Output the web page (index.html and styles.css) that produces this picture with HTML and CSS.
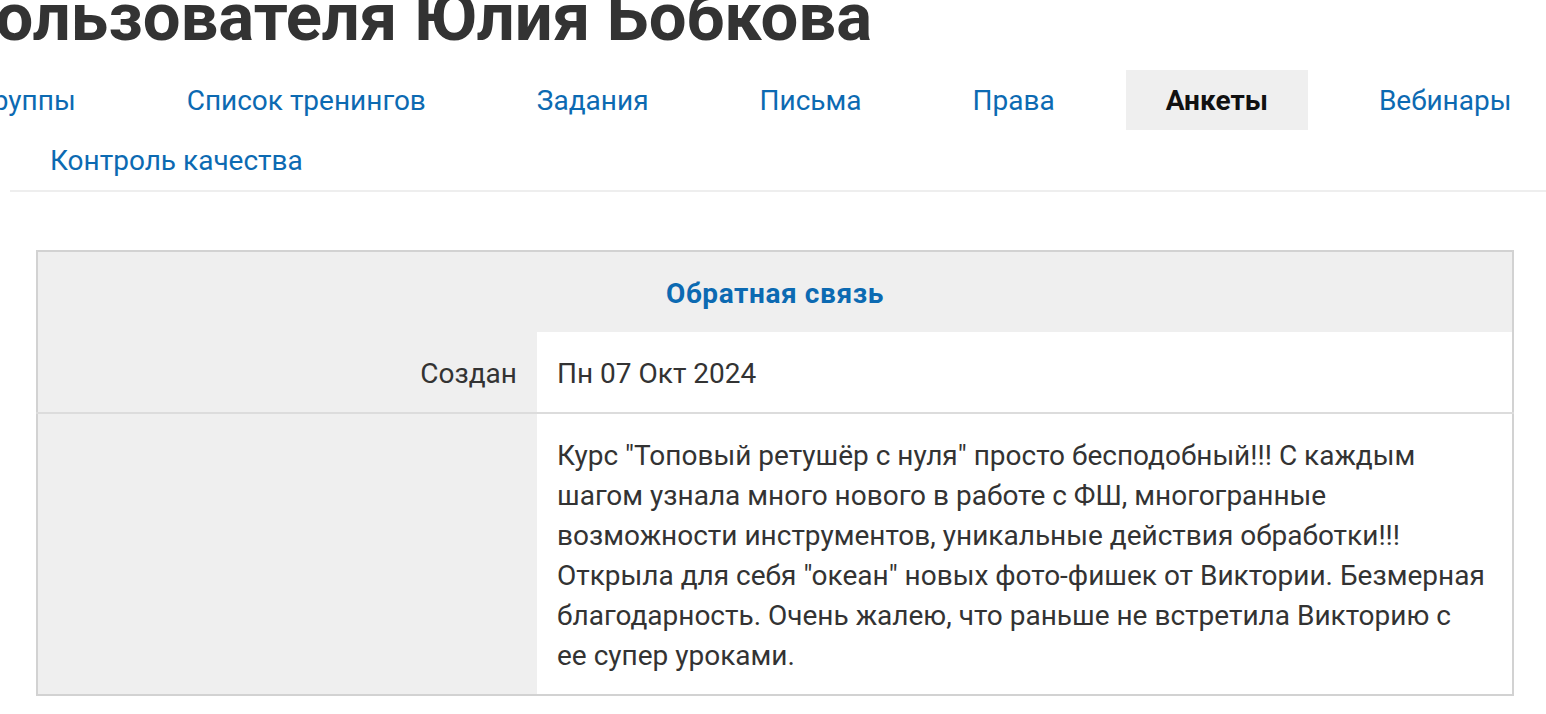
FILE: index.html
```html
<!DOCTYPE html>
<html lang="ru">
<head>
<meta charset="utf-8">
<title>Анкеты пользователя Юлия Бобкова</title>
<link rel="stylesheet" href="styles.css">
</head>
<body>
<div class="page">
  <div class="title-row">
    <h1 class="title">Анкеты пользователя Юлия Бобкова</h1>
  </div>
  <ul class="tabs">
    <li class="tab tab-first"><a href="#">Группы</a></li>
    <li class="tab"><a href="#">Список тренингов</a></li>
    <li class="tab"><a href="#">Задания</a></li>
    <li class="tab"><a href="#">Письма</a></li>
    <li class="tab"><a href="#">Права</a></li>
    <li class="tab active"><a href="#">Анкеты</a></li>
    <li class="tab"><a href="#">Вебинары</a></li>
    <li class="tab"><a href="#">Контроль качества</a></li>
  </ul>
  <table class="survey">
    <tr>
      <th class="head" colspan="2"><a href="#">Обратная связь</a></th>
    </tr>
    <tr>
      <th class="label">Создан</th>
      <td class="value">Пн 07 Окт 2024</td>
    </tr>
    <tr class="row-sep">
      <th class="label"></th>
      <td class="value"><p class="answer">Курс "Топовый ретушёр с нуля" просто бесподобный!!! С каждым шагом узнала много нового в работе с ФШ, многогранные возможности инструментов, уникальные действия обработки!!! Открыла для себя "океан" новых фото-фишек от Виктории. Безмерная благодарность. Очень жалею, что раньше не встретила Викторию с ее супер уроками.</p></td>
    </tr>
  </table>
</div>
</body>
</html>
```

FILE: styles.css
```css
html, body {
  margin: 0;
  padding: 0;
  background: #fff;
  overflow: hidden;
}
body {
  font-family: "Roboto", "Noto Sans", sans-serif;
  font-size: 28px;
  line-height: 40px;
  color: #333;
  width: 1546px;
  height: 714px;
}
.page {
  display: flex;
  flex-direction: column;
}
.title-row {
  display: flex;
  justify-content: flex-end;
  width: 872px;
  margin-top: -18px;
}
.title {
  margin: 0;
  flex: none;
  font-size: 67px;
  line-height: 70px;
  font-weight: 700;
  color: #333;
  white-space: nowrap;
}
.tabs {
  list-style: none;
  margin: 18px 0 0 10px;
  padding: 0;
  width: 1600px;
  display: flex;
  flex-wrap: wrap;
  column-gap: 31px;
  border-bottom: 2px solid #eee;
}
.tab a {
  display: block;
  padding: 11px 40px 9px;
  color: #0c6ab2;
  text-decoration: none;
}
.tab-first {
  margin-left: -70px;
}
.tab.active a {
  background: #efefef;
  color: #111;
  font-weight: 700;
}
.survey {
  margin: 58px 0 0 36px;
  width: 1478px;
  border-collapse: collapse;
  border: 2px solid #d2d2d2;
}
.survey th, .survey td {
  padding: 22px 20px 18px;
  vertical-align: top;
}
.row-sep th, .row-sep td {
  border-top: 2px solid #dcdcdc;
}
.head {
  background: #efefef;
  text-align: center;
  font-weight: 700;
  letter-spacing: 0.6px;
}
.head a {
  color: #0c6ab2;
  text-decoration: none;
}
.label {
  width: 459px;
  background: #efefef;
  text-align: right;
  font-weight: 400;
}
.value {
  background: #fff;
}
.answer {
  margin: 0;
  max-width: 929.5px;
}
```
